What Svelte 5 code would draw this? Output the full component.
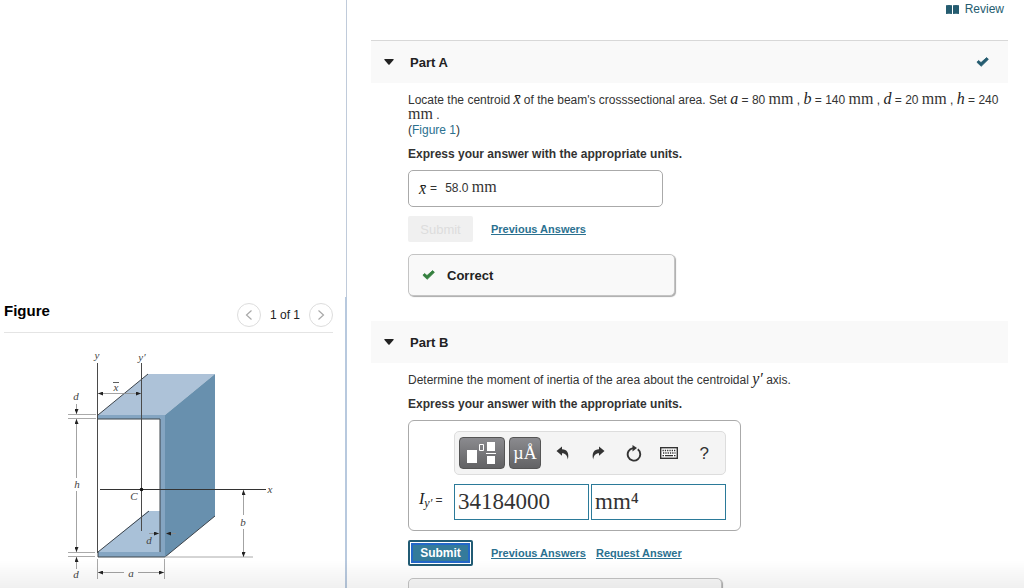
<script>
  let openA = $state(true);
  let openB = $state(true);
  let value = $state('34184000');
  let units = $state('mm⁴');

  const dimensions = [
    {name: 'a', amount: 80},
    {name: 'b', amount: 140},
    {name: 'd', amount: 20},
    {name: 'h', amount: 240}
  ];
</script>

{#snippet check()}
  <svg class="check" width="13" height="10" viewBox="0 0 13 10" aria-hidden="true">
    <path d="M0.9 5.2 L2.6 3.5 L5 5.6 L10.6 0.6 L12.4 2.3 L5.2 9.3 Z" fill="currentColor" stroke="currentColor" stroke-width="0.8" stroke-linejoin="round" />
  </svg>
{/snippet}

{#snippet caret()}
  <svg width="10" height="6" viewBox="0 0 10 6" aria-hidden="true">
    <path d="M0.6 0 H9.4 Q10 0.4 9.5 1 L5.6 5.4 Q5 6 4.4 5.4 L0.5 1 Q0 0.4 0.6 0 Z" fill="#222" />
  </svg>
{/snippet}

<div class="page">
  <aside>
    <div class="blank"></div>
    <section class="figure">
      <header>
        <h2>Figure</h2>
        <nav>
          <button class="round" aria-label="Previous figure">
            <svg width="8" height="12" viewBox="0 0 8 12"><path d="M6.5 1.5 L1.5 6 L6.5 10.5" fill="none" stroke="#a8a8a8" stroke-width="1.2" /></svg>
          </button>
          <span>1 of 1</span>
          <button class="round" aria-label="Next figure">
            <svg width="8" height="12" viewBox="0 0 8 12"><path d="M1.5 1.5 L6.5 6 L1.5 10.5" fill="none" stroke="#a8a8a8" stroke-width="1.2" /></svg>
          </button>
        </nav>
      </header>

      <svg class="beam" width="221" height="243" viewBox="58 345 221 243" role="img" aria-label="Channel beam cross section">
        <defs>
          <marker id="arrow" viewBox="0 0 5 4" refX="5" refY="2" markerWidth="5" markerHeight="4" markerUnits="userSpaceOnUse" orient="auto-start-reverse">
            <path d="M0 0 L5 2 L0 4 Z" fill="#222" />
          </marker>
        </defs>

        <!-- beam faces -->
        <path d="M98 415 L148 374 H215 L165 415 Z" fill="#adc2d8" />
        <path d="M165 415 L215 374 V516 L165 557 Z" fill="#6890ae" />
        <path d="M98 552 L148 511 H160 V552 Z" fill="#a9c1d8" />
        <path d="M98 415 H165 V557 H98 V552 H160 V419 H98 Z" fill="#84a5c2" />
        <path d="M98 415 L148 374 M98 552 L149 511 M98 419 H160 V552 M98 552 V557 H165 L215 516" fill="none" stroke="#3d444b" />

        <!-- axes -->
        <g stroke="#4a4a4a">
          <path d="M97.5 363 V553 M141.5 363 V531" />
          <path d="M100 489.5 H266" stroke="#333" />
        </g>
        <circle cx="141.5" cy="489.5" r="1.8" fill="#111" />

        <!-- extension lines -->
        <path d="M68 414.5 H96 M68 418.5 H96 M68 552.5 H95 M68 556.5 H95 M165 557 H253 M97.5 559 V579 M164.5 559 V579" stroke="#aaa" fill="none" />

        <!-- dimension lines -->
        <g stroke="#8c8c8c" stroke-width="0.8">
          <path d="M98 393.5 H141" marker-start="url(#arrow)" marker-end="url(#arrow)" />
          <path d="M76.5 404 V414" marker-end="url(#arrow)" />
          <path d="M76.5 478 V419" marker-end="url(#arrow)" />
          <path d="M76.5 491 V552" marker-end="url(#arrow)" />
          <path d="M76.5 569 V557" marker-end="url(#arrow)" />
          <path d="M243.5 515 V490" marker-end="url(#arrow)" />
          <path d="M243.5 529 V557" marker-end="url(#arrow)" />
          <path d="M124 572.5 H98" marker-end="url(#arrow)" />
          <path d="M138 572.5 H164" marker-end="url(#arrow)" />
          <path d="M149 533.5 H159" marker-end="url(#arrow)" />
          <path d="M176 533.5 H166" marker-end="url(#arrow)" />
          <path d="M113 382.5 H119" stroke="#333" />
        </g>

        <g class="labels">
          <text x="97" y="359">y</text>
          <text x="142" y="361">y′</text>
          <text x="116" y="391">x</text>
          <text x="76" y="400">d</text>
          <text x="77" y="488">h</text>
          <text x="134" y="500">C</text>
          <text x="270" y="493">x</text>
          <text x="243" y="526">b</text>
          <text x="149" y="544">d</text>
          <text x="131" y="577">a</text>
          <text x="76" y="578">d</text>
        </g>
      </svg>
    </section>
  </aside>

  <main>
    <div class="top">
      <a class="review" href="#review">
        <svg width="13" height="9" viewBox="0 0 13 9" aria-hidden="true">
          <path d="M0 0.3 Q3 -0.3 6 0.3 V9 Q3 8.400 0 9 Z M7 0.3 Q10 -0.3 13 0.3 V9 Q10 8.400 7 9 Z" fill="#255c70" />
        </svg>
        Review
      </a>
    </div>

    <section class="part">
      <h3 class="first">
        <button class="toggle" aria-expanded={openA} onclick={() => openA = !openA}>{@render caret()}Part A</button>
        <span class="done">{@render check()}</span>
      </h3>
      {#if openA}
        <div class="body">
          <p>
            Locate the centroid <i>x̄</i> of the beam's crosssectional area. Set
            {#each dimensions as dim, index}
              <i>{dim.name}</i> = {dim.amount} <span class="unit">mm</span> {index < 3 ? ', ' : '.'}
            {/each}
            <br />(<a href="#figure">Figure 1</a>)
          </p>
          <p><strong>Express your answer with the appropriate units.</strong></p>
          <div class="answer"><i>x̄</i> = <span class="given">58.0 <span class="unit">mm</span></span></div>
          <div class="actions">
            <button class="submit" disabled>Submit</button>
            <a href="#previous">Previous Answers</a>
          </div>
          <div class="feedback">{@render check()}Correct</div>
        </div>
      {/if}
    </section>

    <section class="part">
      <h3>
        <button class="toggle" aria-expanded={openB} onclick={() => openB = !openB}>{@render caret()}Part B</button>
      </h3>
      {#if openB}
        <div class="body">
          <p>Determine the moment of inertia of the area about the centroidal <i>y′</i> axis.</p>
          <p><strong>Express your answer with the appropriate units.</strong></p>
          <div class="entry">
            <div class="toolbar">
              <button class="key wide" aria-label="Templates">
                <svg width="30" height="26" viewBox="0 0 30 26">
                  <path d="M0 10 H10 V23 H0 Z M20 2 H28 V11 H20 Z M20 16 H28 V24 H20 Z M19 13 H29 V14 H19 Z" fill="#fff" />
                  <path d="M12.5 4.5 H16.5 V10.5 H12.5 Z" fill="none" stroke="#fff" />
                </svg>
              </button>
              <button class="key" aria-label="Units">µÅ</button>
              <button class="tool" aria-label="Undo">
                <svg width="14" height="14" viewBox="0 0 14 14"><path d="M0.5 5 L6 0.5 V3.2 C11 3.2 13.5 7 11.8 13.5 C11.3 9.5 9.5 7.2 6 7.2 V9.8 Z" fill="#333" /></svg>
              </button>
              <button class="tool" aria-label="Redo">
                <svg width="14" height="14" viewBox="0 0 14 14"><path d="M13.5 5 L8 0.5 V3.2 C3 3.2 0.5 7 2.2 13.5 C2.7 9.5 4.5 7.2 8 7.2 V9.8 Z" fill="#333" /></svg>
              </button>
              <button class="tool" aria-label="Reset">
                <svg width="16" height="17" viewBox="0 0 16 17">
                  <path d="M11.8 4.3 A6.3 6.3 0 1 1 7 3.1" fill="none" stroke="#333" stroke-width="1.9" />
                  <path d="M6.5 0 L11 3 L6.5 6.5 Z" fill="#333" />
                </svg>
              </button>
              <button class="tool" aria-label="Keyboard">
                <svg width="18" height="12" viewBox="0 0 18 12">
                  <rect x="0.7" y="0.7" width="16.6" height="10.6" fill="#fff" stroke="#333" stroke-width="1.4" />
                  <path d="M2.5 3.5 H15.5 M3 6 H15.5" stroke="#333" stroke-width="1.3" stroke-dasharray="1.3 1" />
                  <path d="M2.5 8.7 H4 M5 8.7 H13 M14 8.7 H15.5" stroke="#333" stroke-width="1.2" />
                </svg>
              </button>
              <button class="tool help" aria-label="Help">?</button>
            </div>
            <label for="value"><i>I<sub>y′</sub></i> =</label>
            <div class="fields">
              <input id="value" bind:value />
              <input aria-label="Units" bind:value={units} />
            </div>
          </div>
          <div class="actions">
            <button class="submit active">Submit</button>
            <a href="#previous">Previous Answers</a>
            <a href="#request">Request Answer</a>
          </div>
          <div class="feedback attempt"></div>
        </div>
      {/if}
    </section>
  </main>
  <div class="shade"></div>
</div>

<style>
  :global(body) {
    background: #fff;
  }

  .page {
    color: #333;
    display: grid;
    font-family: 'Liberation Sans', Arial, sans-serif;
    font-size: 12px;
    grid-template-columns: 347fr 677fr;
    grid-template-rows: minmax(0, 1fr);
    height: 100vh;
    line-height: 15px;
    overflow: hidden;
  }

  .page * {
    box-sizing: border-box;
  }

  button,
  input {
    font: inherit;
    margin: 0;
    padding: 0;
  }

  button {
    align-items: center;
    background: none;
    border: 0;
    color: inherit;
    display: flex;
    justify-content: center;
  }

  a {
    color: #2b7190;
    text-decoration: none;
  }

  i {
    color: #222;
    font-family: 'Liberation Serif', serif;
    font-size: 16px;
    line-height: 0;
  }

  aside {
    display: flex;
    flex-direction: column;
    min-height: 0;
  }

  .blank {
    border-right: 1px solid #c0cbda;
    flex: 1;
  }

  .figure {
    border-right: 2px solid #b8c9de;
    padding: 0 12px 0 4px;
  }

  .figure header {
    align-items: center;
    border-bottom: 1px solid #e4e4e4;
    display: flex;
    height: 36px;
    justify-content: space-between;
    margin-bottom: 12px;
  }

  h2 {
    color: #000;
    font-size: 15px;
    line-height: 20px;
    margin: 0;
    padding-bottom: 8px;
  }

  nav {
    align-items: center;
    color: #222;
    display: flex;
    gap: 9px;
  }

  nav span {
    padding-top: 2px;
  }

  .round {
    background: #fff;
    border: 1px solid #ddd;
    border-radius: 50%;
    height: 24px;
    width: 24px;
  }

  .beam {
    display: block;
    margin: 0 auto;
  }

  .labels {
    fill: #444;
    font-family: 'Liberation Serif', serif;
    font-size: 11px;
    font-style: italic;
    text-anchor: middle;
  }

  main {
    min-width: 0;
    padding: 0 16px 0 24px;
  }

  .top {
    display: flex;
    height: 40px;
    justify-content: flex-end;
    padding: 2px 4px 0 0;
  }

  .review {
    align-items: center;
    color: #255c70;
    display: flex;
    gap: 6px;
    height: 15px;
  }

  .part {
    margin-bottom: 25px;
  }

  h3 {
    align-items: center;
    background: #f9f9f9;
    color: #222;
    display: flex;
    font-size: 13px;
    height: 42px;
    justify-content: space-between;
    margin: 0;
    padding: 0 19px 0 13px;
  }

  h3.first {
    border-top: 1px solid #d8d8d8;
    height: 43px;
  }

  .toggle {
    gap: 16px;
  }

  .check {
    display: block;
  }

  .done {
    color: #255c70;
  }

  .body {
    padding: 10px 0 0 37px;
  }

  p {
    margin: 0 0 9px;
  }

  p + p {
    margin-bottom: 8px;
  }

  .unit {
    font-family: 'Liberation Serif', serif;
    font-size: 16px;
    line-height: 0;
  }

  .answer {
    align-items: center;
    border: 1px solid #aaa;
    border-radius: 5px;
    display: flex;
    gap: 4px;
    height: 37px;
    max-width: 255px;
    padding: 0 10px;
  }

  .given {
    margin-left: 4px;
  }

  .actions {
    align-items: center;
    display: flex;
    font-size: 11px;
    font-weight: bold;
    margin: 9px 0 12px;
  }

  .actions a {
    margin-right: 10px;
    text-decoration: underline;
  }

  .submit {
    background: #f0f0f0;
    border-radius: 2px;
    color: #ddd;
    font-size: 13px;
    font-weight: normal;
    height: 26px;
    margin-right: 18px;
    width: 65px;
  }

  .submit.active {
    background: #347b9b;
    border: 2px solid #215b74;
    box-shadow: inset 0 0 0 1px #fff, inset 0 0 0 3px #2468c8;
    color: #fff;
    font-size: 12px;
    font-weight: bold;
  }

  .feedback {
    align-items: center;
    background: #f9f9f9;
    border: 1px solid #c4c4c4;
    border-radius: 5px;
    box-shadow: 1px 1px 1px #aaa;
    color: #222;
    display: flex;
    font-size: 13px;
    font-weight: bold;
    gap: 12px;
    height: 42px;
    max-width: 267px;
    padding: 0 13px;
  }

  .feedback .check {
    color: #35803f;
  }

  .attempt {
    max-width: 314px;
  }

  .entry {
    align-items: center;
    border: 1px solid #aaa;
    border-radius: 6px;
    column-gap: 8px;
    display: grid;
    grid-template-columns: 27px minmax(0, 1fr);
    max-width: 333px;
    padding: 10px 14px 10px 10px;
    row-gap: 9px;
  }

  .toolbar {
    align-items: center;
    background: #f4f4f4;
    border: 1px solid #ddd;
    border-radius: 5px;
    display: flex;
    grid-column: 2;
    height: 44px;
    padding: 0 3px 0 4px;
  }

  .key {
    background: linear-gradient(#8b8b8f, #626264);
    border: 1px solid #555;
    border-radius: 4px;
    color: #fff;
    font-family: 'Liberation Serif', serif;
    font-size: 18px;
    height: 32px;
    margin-right: 4px;
    width: 32px;
  }

  .key.wide {
    width: 46px;
  }

  .tool {
    flex: 1;
    height: 32px;
  }

  .help {
    font-size: 17px;
  }

  label {
    padding-bottom: 4px;
    white-space: nowrap;
  }

  sub {
    font-size: 12px;
    line-height: 0;
    vertical-align: -3px;
  }

  .fields {
    display: flex;
    gap: 2px;
  }

  input {
    border: 1px solid #2b7a99;
    border-radius: 0;
    color: #333;
    flex: 1;
    font-family: 'Liberation Serif', serif;
    font-size: 23px;
    height: 36px;
    min-width: 0;
    padding: 0 3px;
  }

  .shade {
    background: linear-gradient(transparent, rgba(0, 0, 0, 0.06));
    bottom: 0;
    height: 28px;
    left: 0;
    pointer-events: none;
    position: fixed;
    right: 0;
  }
</style>
